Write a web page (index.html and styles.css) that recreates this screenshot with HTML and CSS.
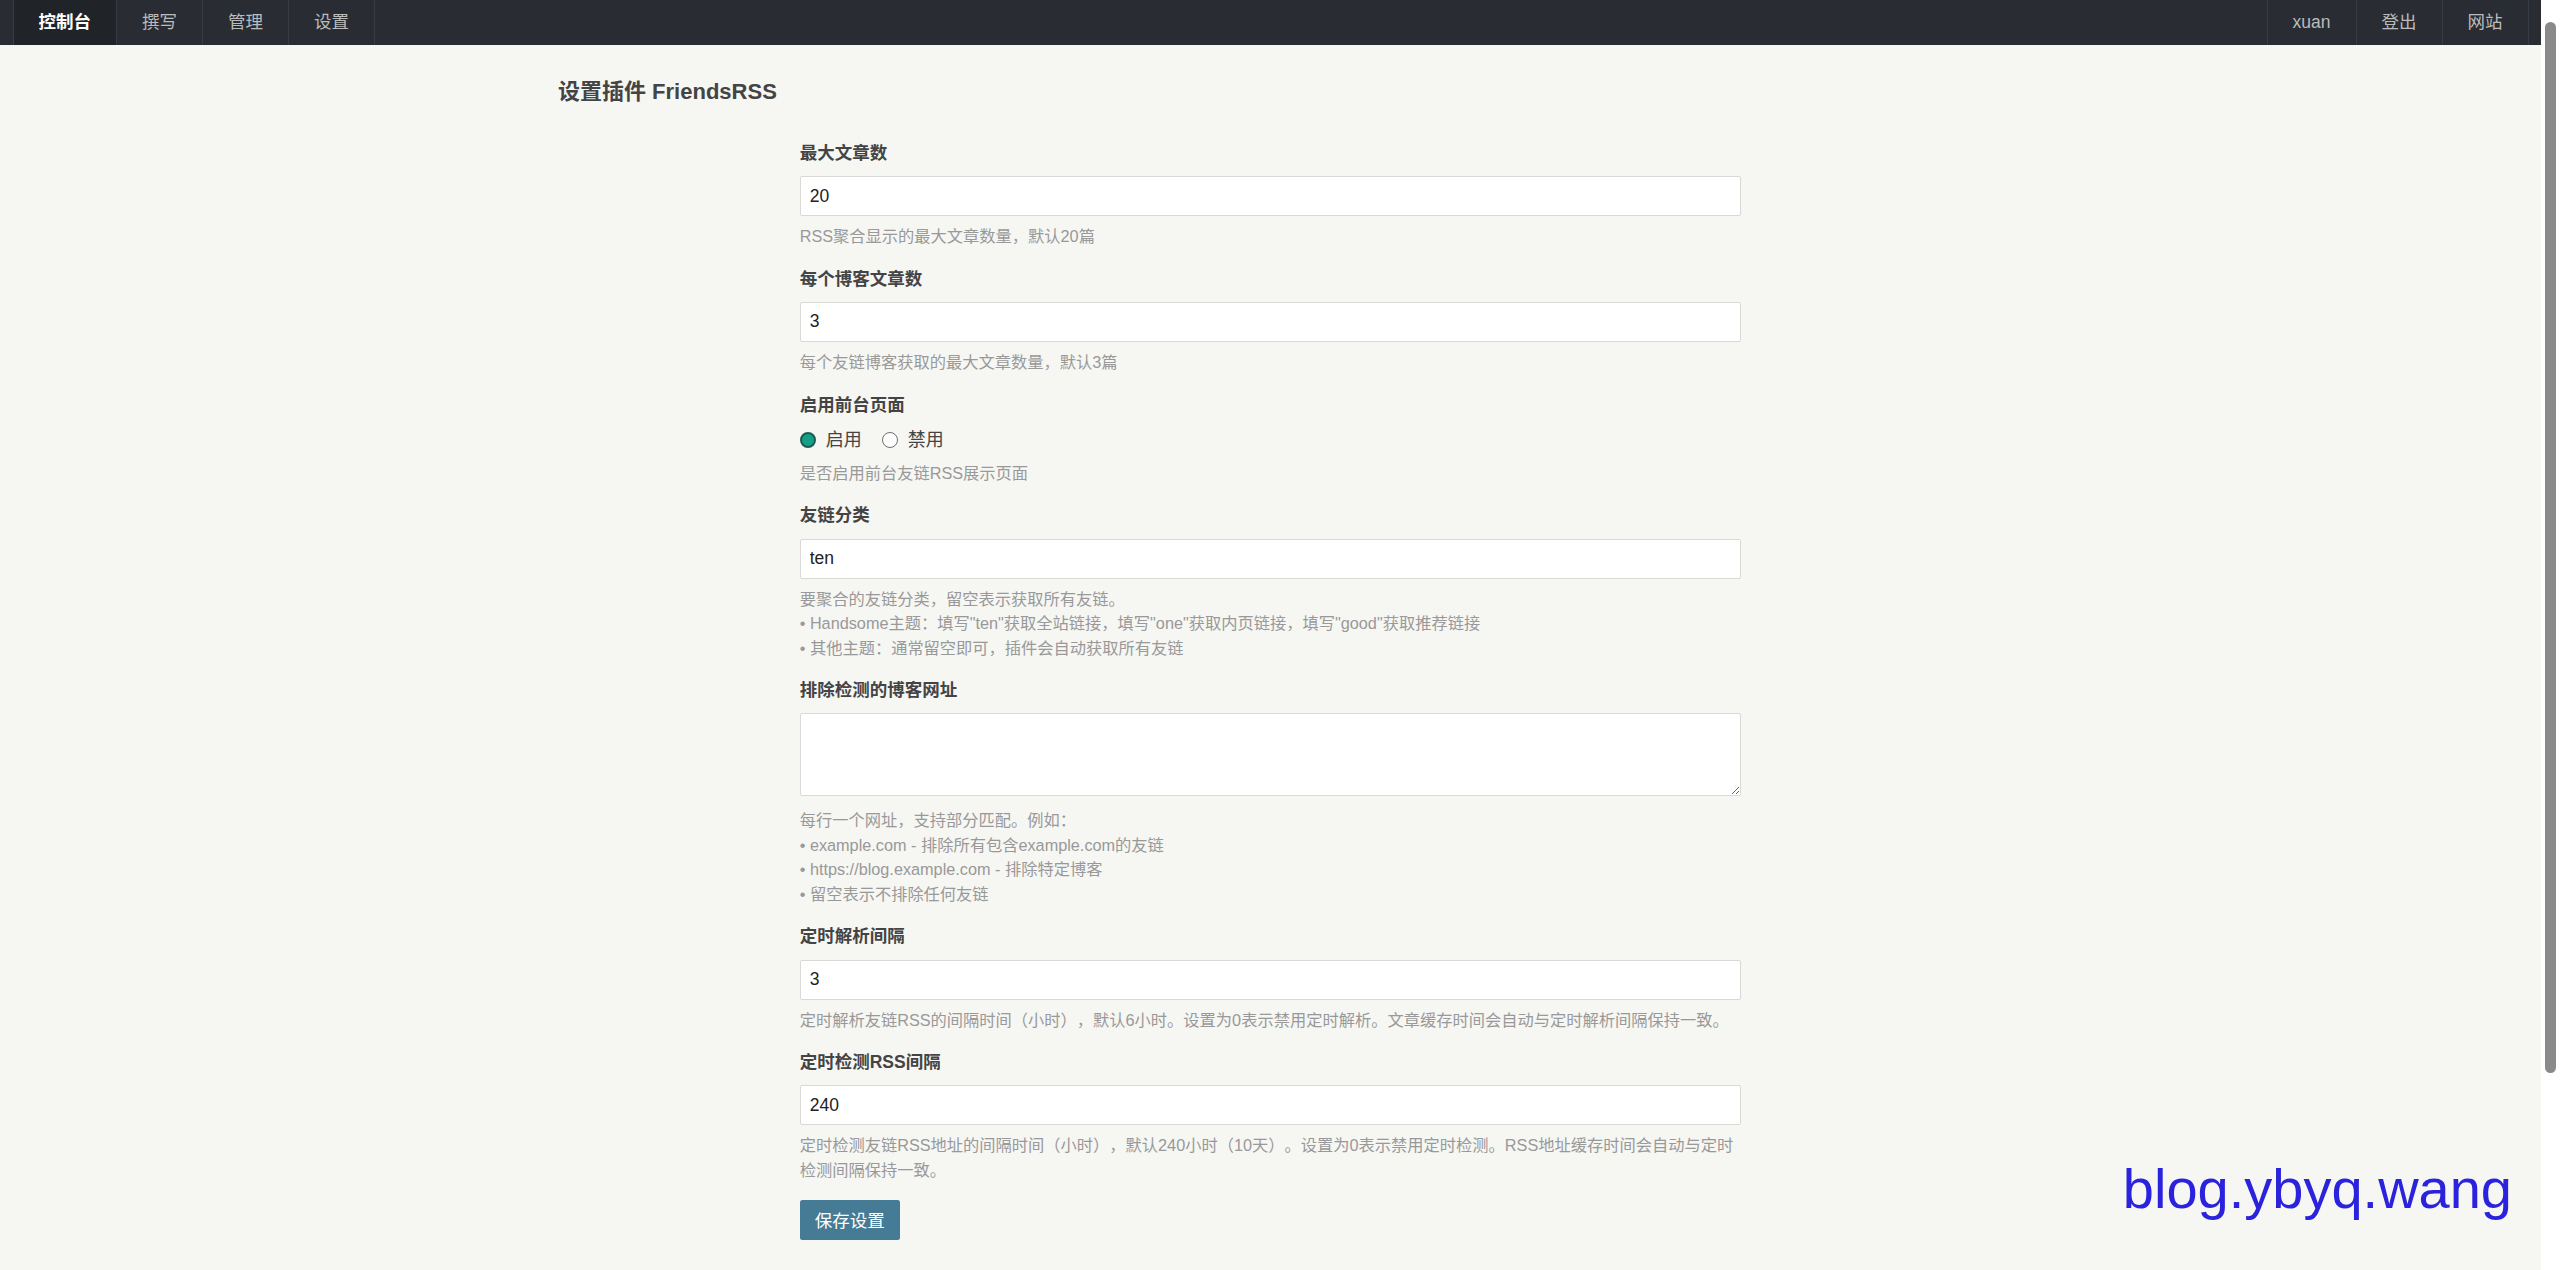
FILE: index.html
```html
<!DOCTYPE html>
<html lang="zh-CN">
<head>
    <meta charset="UTF-8">
    <meta name="viewport" content="width=device-width, initial-scale=1.0">
    <title>设置插件 FriendsRSS</title>
    <link rel="stylesheet" href="styles.css">
</head>
<body>
    <div class="frame">
        <div class="page">
            <div class="head-nav">
                <ul class="nav-list">
                    <li class="focus"><a href="#">控制台</a></li>
                    <li><a href="#">撰写</a></li>
                    <li><a href="#">管理</a></li>
                    <li><a href="#">设置</a></li>
                </ul>
                <div class="operate">
                    <a href="#">xuan</a>
                    <a href="#">登出</a>
                    <a href="#">网站</a>
                </div>
            </div>

            <div class="main">
                <div class="container">
                    <div class="page-title">
                        <h2>设置插件 FriendsRSS</h2>
                    </div>

                    <div class="config-form">
                        <form>
                            <ul class="option">
                                <li>
                                    <label class="label">最大文章数</label>
                                    <input type="text" class="text" value="20">
                                    <p class="description">RSS聚合显示的最大文章数量，默认20篇</p>
                                </li>
                            </ul>
                            <ul class="option">
                                <li>
                                    <label class="label">每个博客文章数</label>
                                    <input type="text" class="text" value="3">
                                    <p class="description">每个友链博客获取的最大文章数量，默认3篇</p>
                                </li>
                            </ul>
                            <ul class="option">
                                <li>
                                    <label class="label">启用前台页面</label>
                                    <div class="multiline">
                                        <span class="choice"><input type="radio" name="enable" checked><label>启用</label></span>
                                        <span class="choice"><input type="radio" name="enable"><label>禁用</label></span>
                                    </div>
                                    <p class="description">是否启用前台友链RSS展示页面</p>
                                </li>
                            </ul>
                            <ul class="option">
                                <li>
                                    <label class="label">友链分类</label>
                                    <input type="text" class="text" value="ten">
                                    <p class="description">要聚合的友链分类，留空表示获取所有友链。<br>• Handsome主题：填写"ten"获取全站链接，填写"one"获取内页链接，填写"good"获取推荐链接<br>• 其他主题：通常留空即可，插件会自动获取所有友链</p>
                                </li>
                            </ul>
                            <ul class="option">
                                <li>
                                    <label class="label">排除检测的博客网址</label>
                                    <textarea class="text"></textarea>
                                    <p class="description">每行一个网址，支持部分匹配。例如：<br>• example.com - 排除所有包含example.com的友链<br>• https://blog.example.com - 排除特定博客<br>• 留空表示不排除任何友链</p>
                                </li>
                            </ul>
                            <ul class="option">
                                <li>
                                    <label class="label">定时解析间隔</label>
                                    <input type="text" class="text" value="3">
                                    <p class="description">定时解析友链RSS的间隔时间（小时），默认6小时。设置为0表示禁用定时解析。文章缓存时间会自动与定时解析间隔保持一致。</p>
                                </li>
                            </ul>
                            <ul class="option">
                                <li>
                                    <label class="label">定时检测RSS间隔</label>
                                    <input type="text" class="text" value="240">
                                    <p class="description">定时检测友链RSS地址的间隔时间（小时），默认240小时（10天）。设置为0表示禁用定时检测。RSS地址缓存时间会自动与定时检测间隔保持一致。</p>
                                </li>
                            </ul>
                            <ul class="option submit">
                                <li>
                                    <button type="button" class="btn primary">保存设置</button>
                                </li>
                            </ul>
                        </form>
                    </div>
                </div>
            </div>
        </div>

        <div class="scrollbar">
            <div class="thumb"></div>
        </div>
    </div>

    <div class="watermark">blog.ybyq.wang</div>
</body>
</html>
```

FILE: styles.css
```css
html, body {
    margin: 0;
    padding: 0;
    height: 100%;
    overflow: hidden;
}
body {
    font-family: "Liberation Sans", "Noto Sans CJK SC", sans-serif;
    font-size: 17.5px;
    line-height: 1.5;
    color: #444;
    background: #f6f6f3;
}
a {
    text-decoration: none;
}
.frame {
    display: flex;
    height: 1270px;
}
.page {
    flex: 1;
    overflow: hidden;
}

/* top navigation */
.head-nav {
    display: flex;
    justify-content: space-between;
    height: 45px;
    padding: 0 12.5px;
    background: #292d33;
}
.nav-list {
    display: flex;
    margin: 0;
    padding: 0;
    list-style: none;
    border-left: 1px solid #383d45;
}
.nav-list a,
.operate a {
    display: block;
    height: 45px;
    line-height: 45px;
    padding: 0 25px;
    color: #bbb;
}
.nav-list a {
    border-right: 1px solid #383d45;
}
.nav-list .focus a {
    background: #202328;
    color: #fff;
    font-weight: bold;
}
.operate {
    display: flex;
    border-right: 1px solid #383d45;
}
.operate a {
    border-left: 1px solid #383d45;
}

/* main */
.container {
    max-width: 1450px;
    margin: 0 auto;
    padding: 0 12.5px;
    box-sizing: border-box;
}
.page-title h2 {
    margin: 31px 0 0;
    font-size: 22px;
    line-height: 32px;
    color: #444;
}
.config-form {
    width: 941.67px;
    margin: 0 auto;
    padding-top: 14.5px;
}
.option {
    margin: 17.25px 0;
    padding: 0;
    list-style: none;
}
.label {
    display: block;
    margin-bottom: 10px;
    font-weight: bold;
    line-height: 26.25px;
}
input.text,
textarea.text {
    display: block;
    width: 100%;
    box-sizing: border-box;
    margin: 0;
    border: 1px solid #d9d9d6;
    border-radius: 2px;
    background: #fff;
    color: #222;
    font-family: "Liberation Sans", "Noto Sans CJK SC", sans-serif;
    font-size: 17.5px;
}
input.text {
    height: 40px;
    padding: 0 9px;
}
textarea.text {
    height: 83px;
    padding: 6px 9px;
    margin-bottom: 12px;
    resize: vertical;
}
.multiline {
    display: flex;
    align-items: center;
    height: 25px;
    color: #444;
    font-size: 18px;
}
.choice {
    display: flex;
    align-items: center;
    margin-right: 20px;
}
.choice input {
    appearance: none;
    -webkit-appearance: none;
    box-sizing: border-box;
    width: 16px;
    height: 16px;
    margin: 0 10px 0 0;
    border: 1px solid #6e6e6e;
    border-radius: 50%;
    background: #fff;
}
.choice input:checked {
    border: 2px solid #1f5a52;
    background: #13a084;
}
.description {
    margin: 8px 0 0;
    font-size: 16.25px;
    line-height: 24.4px;
    color: #999;
    text-spacing-trim: space-all;
}
.submit {
    margin-top: 15px;
}
.btn {
    height: 40px;
    padding: 0 15px;
    border: none;
    border-radius: 2.5px;
    font-family: "Liberation Sans", "Noto Sans CJK SC", sans-serif;
    font-size: 17.5px;
    cursor: pointer;
}
.btn.primary {
    background: #467b96;
    color: #fff;
}

/* fake scrollbar column */
.scrollbar {
    width: 19px;
    background: #fff;
}
.thumb {
    width: 11px;
    height: 1051px;
    margin: 22px 0 0 4px;
    border-radius: 6px;
    background: #8a8a8a;
}

.watermark {
    position: absolute;
    top: 1157px;
    right: 48px;
    font-family: "Liberation Sans", sans-serif;
    font-size: 56px;
    line-height: 64px;
    color: #2a22dd;
}
```
